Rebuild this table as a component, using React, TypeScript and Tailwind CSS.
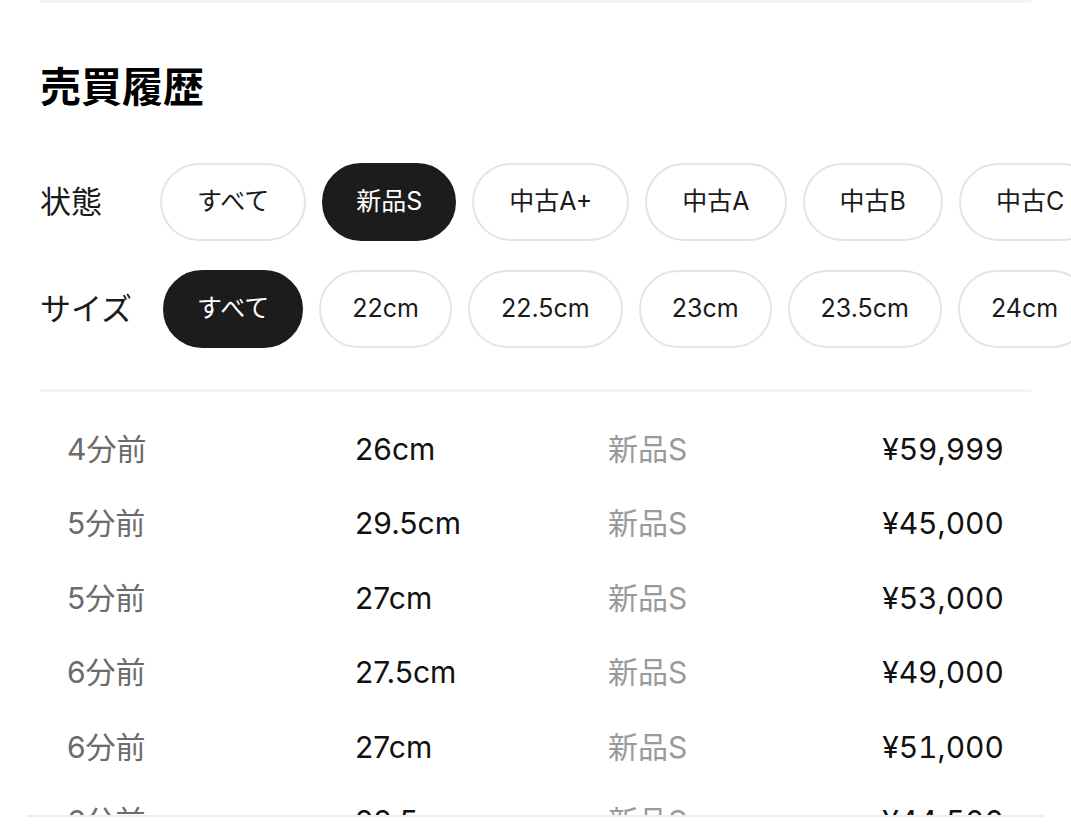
const font = { fontFamily: 'Inter, "Noto Sans CJK JP", sans-serif' };

const conditions = ["すべて", "新品S", "中古A+", "中古A", "中古B", "中古C", "中古D"];
const sizes = ["すべて", "22cm", "22.5cm", "23cm", "23.5cm", "24cm", "24.5cm"];

const history = [
  { ago: "4分前", size: "26cm", cond: "新品S", price: "¥59,999" },
  { ago: "5分前", size: "29.5cm", cond: "新品S", price: "¥45,000" },
  { ago: "5分前", size: "27cm", cond: "新品S", price: "¥53,000" },
  { ago: "6分前", size: "27.5cm", cond: "新品S", price: "¥49,000" },
  { ago: "6分前", size: "27cm", cond: "新品S", price: "¥51,000" },
  { ago: "6分前", size: "28.5cm", cond: "新品S", price: "¥44,500" },
];

const activeChip =
  "flex h-[78px] shrink-0 items-center justify-center rounded-full border-2 border-[#1c1c1c] bg-[#1c1c1c] px-[32px] text-[25px] text-white";
const idleChipWide =
  "flex h-[78px] shrink-0 items-center justify-center rounded-full border-2 border-[#e4e4e4] bg-white px-[35px] text-[25px] text-[#1a1a1a]";
const idleChip =
  "flex h-[78px] shrink-0 items-center justify-center rounded-full border-2 border-[#e4e4e4] bg-white px-[31px] text-[25px] text-[#1a1a1a]";

function FilterRow({
  label,
  items,
  selected,
  labelClass,
  idleClass,
}: {
  label: string;
  items: string[];
  selected: string;
  labelClass: string;
  idleClass: string;
}) {
  return (
    <div className="-mr-[41px] flex items-center overflow-hidden">
      <span className={labelClass}>{label}</span>
      <div className="flex gap-4">
        {items.map((item) => (
          <button key={item} className={item === selected ? activeChip : idleClass}>
            {item}
          </button>
        ))}
      </div>
    </div>
  );
}

export default function App() {
  return (
    <div className="relative h-[830px] overflow-hidden bg-white" style={font}>
      <div className="px-10">
        <div className="h-[3px] bg-[#f3f3f3]" />
        <h1 className="mt-[64px] text-[41px] font-bold leading-none text-black">売買履歴</h1>

        <div className="mt-[55px] flex flex-col gap-[29px]">
          <FilterRow
            label="状態"
            items={conditions}
            selected="新品S"
            labelClass="w-[120px] shrink-0 text-[31px] text-[#1a1a1a]"
            idleClass={idleChipWide}
          />
          <FilterRow
            label="サイズ"
            items={sizes}
            selected="すべて"
            labelClass="w-[123px] shrink-0 text-[31px] text-[#1a1a1a]"
            idleClass={idleChip}
          />
        </div>

        <div className="mt-[41px] h-[3px] bg-[#f3f3f3]" />

        <div className="mt-[20px] px-[27px]">
          {history.map((row, i) => (
            <div
              key={i}
              className="grid h-[74.5px] grid-cols-[288px_253px_1fr_auto] items-center text-[30px]"
            >
              <span className="text-[#6b6b6b]">{row.ago}</span>
              <span className="text-[#111]">{row.size}</span>
              <span className="text-[#9a9a9a]">{row.cond}</span>
              <span className="text-right tabular-nums text-[#111]">{row.price}</span>
            </div>
          ))}
        </div>
      </div>

      <div className="absolute inset-x-0 top-[815px] bottom-0 bg-white">
        <div className="mx-[27px] h-[2px] bg-[#ededed]" />
      </div>
    </div>
  );
}
